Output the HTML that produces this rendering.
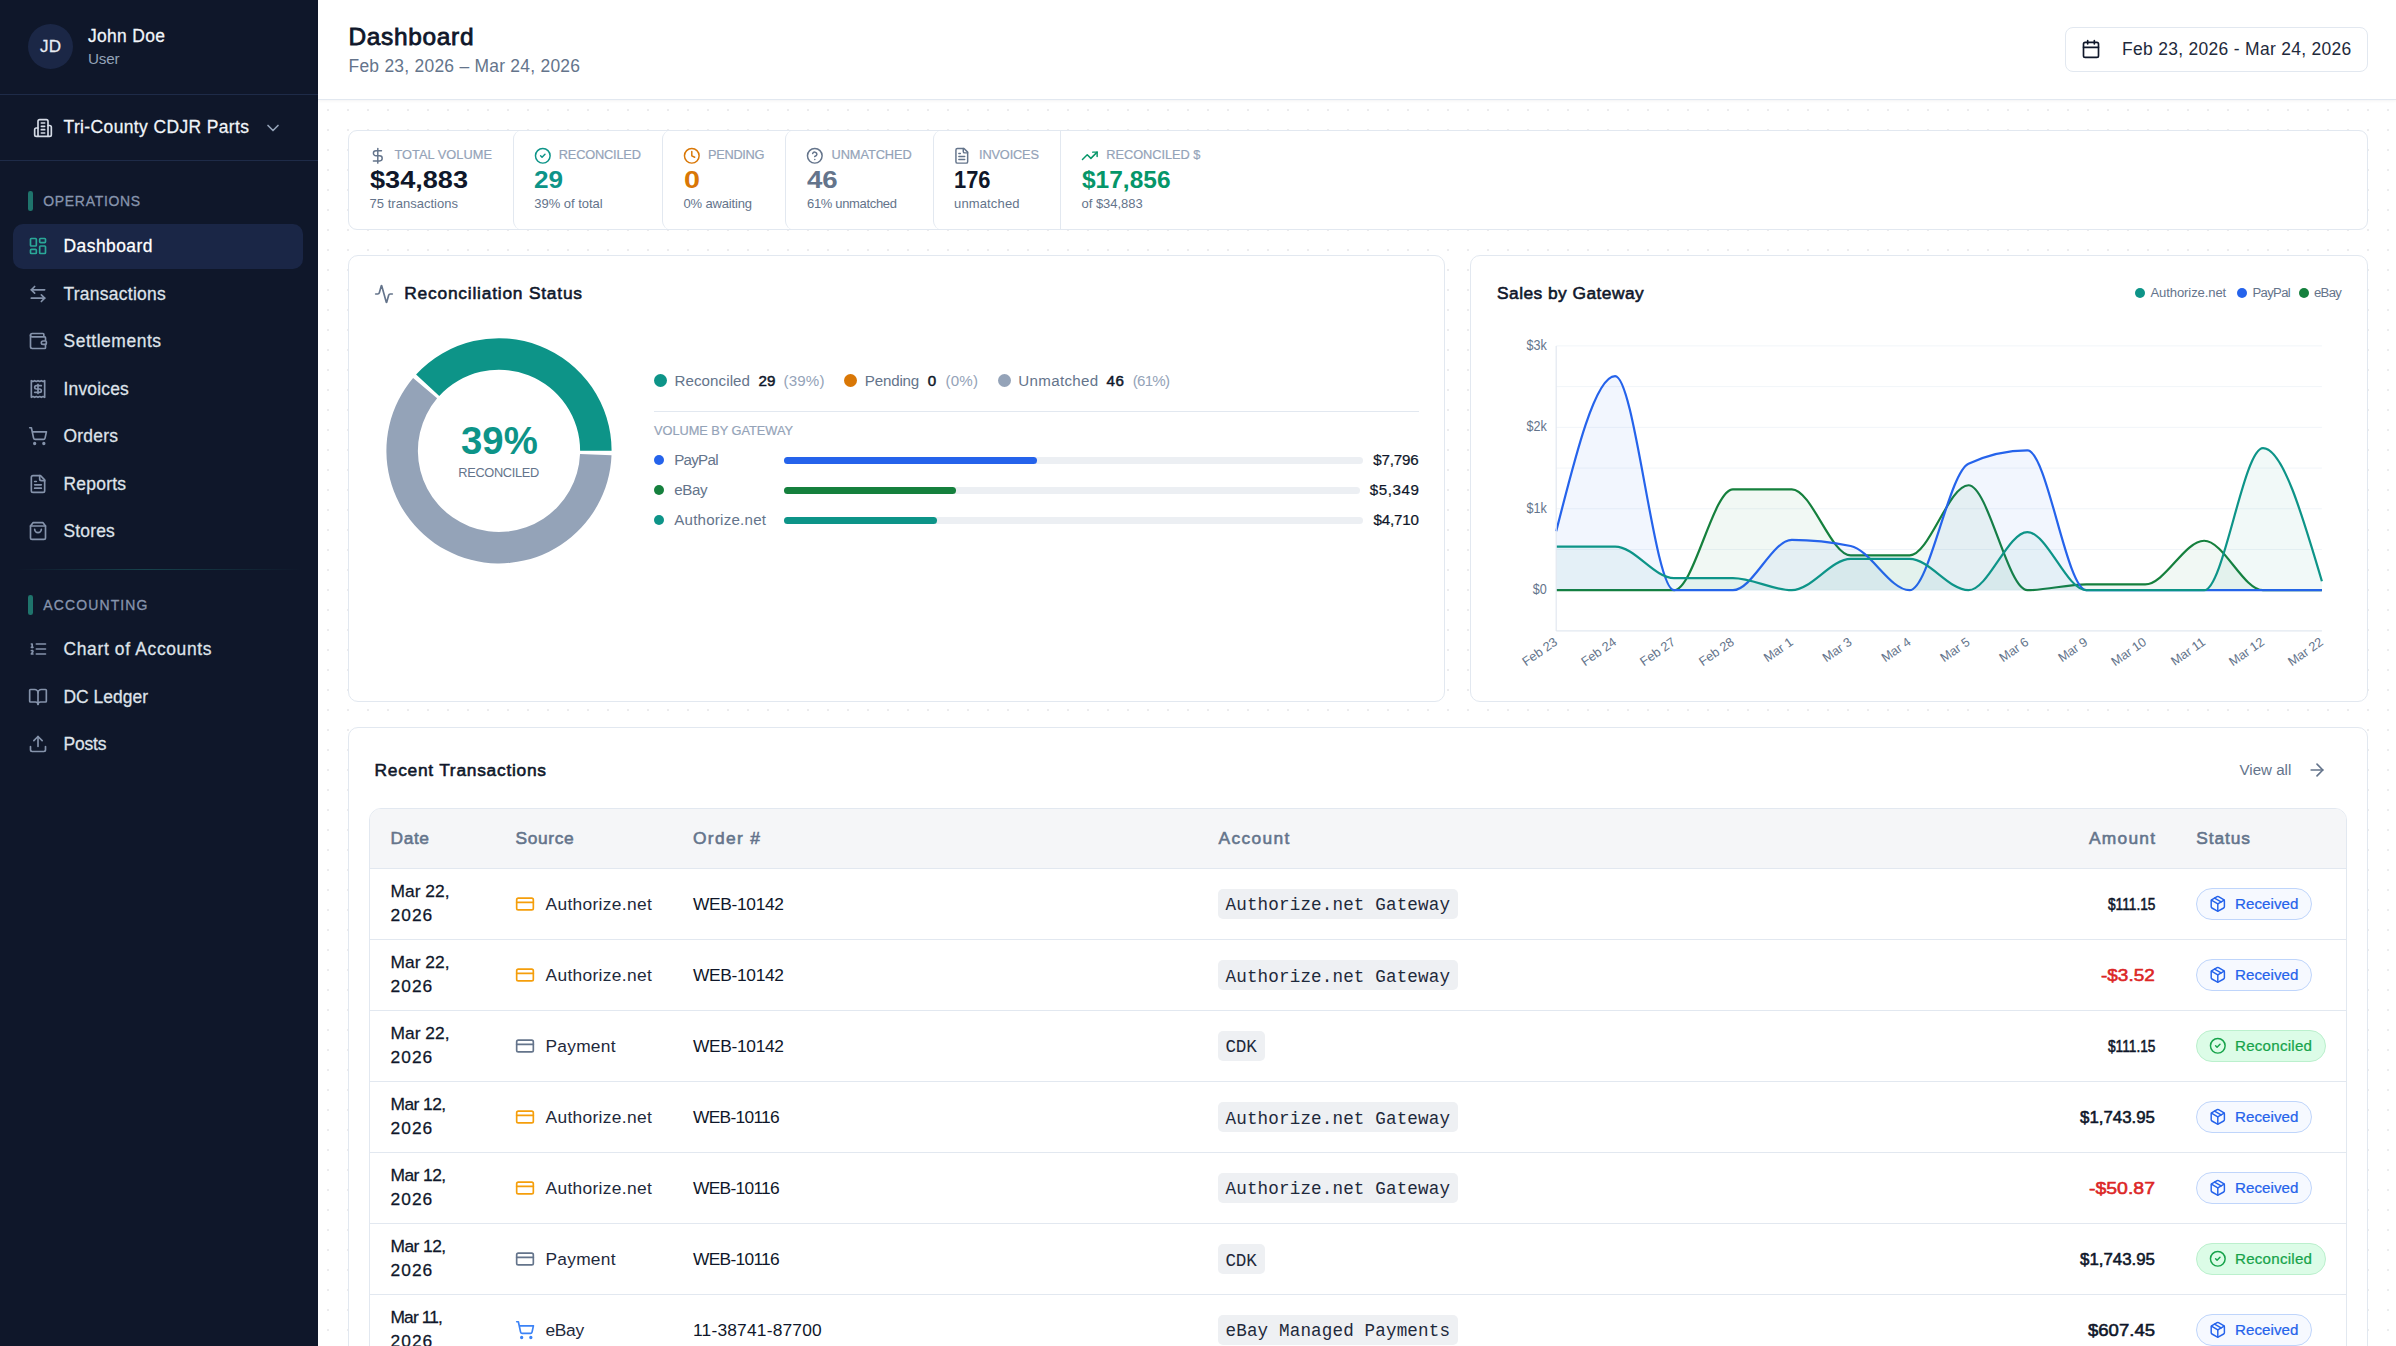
<!DOCTYPE html>
<html lang="en"><head><meta charset="utf-8"><title>Dashboard</title>
<style>
*{box-sizing:border-box;margin:0;padding:0}
html,body{width:2396px;height:1346px;overflow:hidden;background:#fff;font-family:"Liberation Sans",sans-serif;}
#app{position:relative;width:2396px;height:1346px;overflow:hidden}
.t{position:absolute;white-space:nowrap;line-height:1;font-weight:400}
.ic{position:absolute;overflow:visible}
.abs{position:absolute}
.sidebar{position:absolute;left:0;top:0;width:318px;height:1346px;background:#0f172a}
.main{position:absolute;left:318px;top:100px;width:2078px;height:1246px;background-color:#fff;
 background-image:radial-gradient(circle at 10px 10px,#ececee 1px,transparent 1.35px);background-size:20px 20px}
.topbar{position:absolute;left:318px;top:0;width:2078px;height:100px;background:#fff;border-bottom:1px solid #e2e8f0;box-shadow:0 1px 3px rgba(15,23,42,0.05);z-index:2}
.card{position:absolute;background:#fff;border:1px solid #e2e8f0;border-radius:10px}
</style></head><body><div id="app">
<aside class="sidebar"><div class="abs" style="left:28px;top:24px;width:45px;height:45px;border-radius:50%;background:#1b2746"></div><span class="t" style="left:40.00px;top:38.00px;font-size:17.07px;color:#e8ecf3;letter-spacing:0.144px;-webkit-text-stroke:0.26px #e8ecf3;">JD</span><span class="t" style="left:88.00px;top:28.00px;font-size:17.46px;color:#f1f5f9;letter-spacing:0.335px;-webkit-text-stroke:0.26px #f1f5f9;">John Doe</span><span class="t" style="left:88.00px;top:51.00px;font-size:15.23px;color:#94a3b8;letter-spacing:-0.213px;">User</span><div class="abs" style="left:0;top:94px;width:318px;height:1px;background:#1e2b48"></div><svg class="ic" style="left:33.20px;top:117.90px" width="20.00" height="20.00" viewBox="0 0 24 24" fill="none" stroke="#d5dbe6" stroke-width="2" stroke-linecap="round" stroke-linejoin="round"><path d="M6 22V4a2 2 0 0 1 2-2h8a2 2 0 0 1 2 2v18Z"/><path d="M6 12H4a2 2 0 0 0-2 2v6a2 2 0 0 0 2 2h2"/><path d="M18 9h2a2 2 0 0 1 2 2v9a2 2 0 0 1-2 2h-2"/><path d="M10 6h4"/><path d="M10 10h4"/><path d="M10 14h4"/><path d="M10 18h4"/></svg><span class="t" style="left:63.50px;top:119.00px;font-size:17.46px;color:#f1f5f9;letter-spacing:0.393px;-webkit-text-stroke:0.26px #f1f5f9;">Tri-County CDJR Parts</span><svg class="ic" style="left:263.20px;top:118.20px" width="20.00" height="20.00" viewBox="0 0 24 24" fill="none" stroke="#94a3b8" stroke-width="2" stroke-linecap="round" stroke-linejoin="round"><path d="m6 9 6 6 6-6"/></svg><div class="abs" style="left:0;top:160px;width:318px;height:1px;background:#1e2b48"></div><div class="abs" style="left:28.2px;top:191.0px;width:4.6px;height:20px;border-radius:2.3px;background:#1f746c"></div><span class="t" style="left:43.20px;top:195.00px;font-size:13.97px;color:#8794ad;letter-spacing:0.715px;-webkit-text-stroke:0.30px #8794ad;">OPERATIONS</span><div class="abs" style="left:13px;top:224px;width:290px;height:45px;border-radius:10px;background:#1a2646"></div><svg class="ic" style="left:28.00px;top:236.25px" width="20.00" height="20.00" viewBox="0 0 24 24" fill="none" stroke="#2aa898" stroke-width="2" stroke-linecap="round" stroke-linejoin="round"><rect width="7" height="9" x="3" y="3" rx="1"/><rect width="7" height="5" x="14" y="3" rx="1"/><rect width="7" height="9" x="14" y="12" rx="1"/><rect width="7" height="5" x="3" y="16" rx="1"/></svg><span class="t" style="left:63.50px;top:238.00px;font-size:17.46px;color:#ffffff;letter-spacing:0.461px;-webkit-text-stroke:0.26px #ffffff;">Dashboard</span><svg class="ic" style="left:28.00px;top:283.75px" width="20.00" height="20.00" viewBox="0 0 24 24" fill="none" stroke="#8593ab" stroke-width="2" stroke-linecap="round" stroke-linejoin="round"><path d="M8 3 4 7l4 4"/><path d="M4 7h16"/><path d="m16 21 4-4-4-4"/><path d="M20 17H4"/></svg><span class="t" style="left:63.50px;top:286.00px;font-size:17.46px;color:#dfe3ea;letter-spacing:0.278px;-webkit-text-stroke:0.26px #dfe3ea;">Transactions</span><svg class="ic" style="left:28.00px;top:331.25px" width="20.00" height="20.00" viewBox="0 0 24 24" fill="none" stroke="#8593ab" stroke-width="2" stroke-linecap="round" stroke-linejoin="round"><path d="M19 7V4a1 1 0 0 0-1-1H5a2 2 0 0 0 0 4h15a1 1 0 0 1 1 1v4h-3a2 2 0 0 0 0 4h3a1 1 0 0 0 1-1v-2a1 1 0 0 0-1-1"/><path d="M3 5v14a2 2 0 0 0 2 2h15a1 1 0 0 0 1-1v-4"/></svg><span class="t" style="left:63.50px;top:333.00px;font-size:17.46px;color:#dfe3ea;letter-spacing:0.542px;-webkit-text-stroke:0.26px #dfe3ea;">Settlements</span><svg class="ic" style="left:28.00px;top:378.75px" width="20.00" height="20.00" viewBox="0 0 24 24" fill="none" stroke="#8593ab" stroke-width="2" stroke-linecap="round" stroke-linejoin="round"><path d="M4 2v20l2-1 2 1 2-1 2 1 2-1 2 1 2-1 2 1V2l-2 1-2-1-2 1-2-1-2 1-2-1-2 1Z"/><path d="M16 8h-6a2 2 0 1 0 0 4h4a2 2 0 1 1 0 4H8"/><path d="M12 17.5v-11"/></svg><span class="t" style="left:63.50px;top:381.00px;font-size:17.46px;color:#dfe3ea;letter-spacing:0.183px;-webkit-text-stroke:0.26px #dfe3ea;">Invoices</span><svg class="ic" style="left:28.00px;top:426.25px" width="20.00" height="20.00" viewBox="0 0 24 24" fill="none" stroke="#8593ab" stroke-width="2" stroke-linecap="round" stroke-linejoin="round"><circle cx="8" cy="21" r="1"/><circle cx="19" cy="21" r="1"/><path d="M2.05 2.05h2l2.66 12.42a2 2 0 0 0 2 1.58h9.78a2 2 0 0 0 1.95-1.57l1.65-7.43H5.12"/></svg><span class="t" style="left:63.50px;top:428.00px;font-size:17.46px;color:#dfe3ea;letter-spacing:0.241px;-webkit-text-stroke:0.26px #dfe3ea;">Orders</span><svg class="ic" style="left:28.00px;top:473.75px" width="20.00" height="20.00" viewBox="0 0 24 24" fill="none" stroke="#8593ab" stroke-width="2" stroke-linecap="round" stroke-linejoin="round"><path d="M15 2H6a2 2 0 0 0-2 2v16a2 2 0 0 0 2 2h12a2 2 0 0 0 2-2V7Z"/><path d="M14 2v4a2 2 0 0 0 2 2h4"/><path d="M10 9H8"/><path d="M16 13H8"/><path d="M16 17H8"/></svg><span class="t" style="left:63.50px;top:476.00px;font-size:17.46px;color:#dfe3ea;letter-spacing:0.240px;-webkit-text-stroke:0.26px #dfe3ea;">Reports</span><svg class="ic" style="left:28.00px;top:521.25px" width="20.00" height="20.00" viewBox="0 0 24 24" fill="none" stroke="#8593ab" stroke-width="2" stroke-linecap="round" stroke-linejoin="round"><path d="M6 2 3 6v14a2 2 0 0 0 2 2h14a2 2 0 0 0 2-2V6l-3-4Z"/><path d="M3 6h18"/><path d="M16 10a4 4 0 0 1-8 0"/></svg><span class="t" style="left:63.50px;top:523.00px;font-size:17.46px;color:#dfe3ea;letter-spacing:0.169px;-webkit-text-stroke:0.26px #dfe3ea;">Stores</span><div class="abs" style="left:16px;top:569px;width:286px;height:1px;background:linear-gradient(90deg,rgba(31,110,110,0),rgba(31,110,110,.5) 45%,rgba(31,110,110,0))"></div><div class="abs" style="left:28.2px;top:594.9px;width:4.6px;height:20px;border-radius:2.3px;background:#1f746c"></div><span class="t" style="left:43.20px;top:599.00px;font-size:13.97px;color:#8794ad;letter-spacing:1.155px;-webkit-text-stroke:0.30px #8794ad;">ACCOUNTING</span><svg class="ic" style="left:28.00px;top:639.25px" width="20.00" height="20.00" viewBox="0 0 24 24" fill="none" stroke="#8593ab" stroke-width="2" stroke-linecap="round" stroke-linejoin="round"><path d="M10 12h11"/><path d="M10 18h11"/><path d="M10 6h11"/><path d="M4 10h2"/><path d="M4 6h1v4"/><path d="M6 18H4c0-1 2-2 2-3s-1-1.5-2-1"/></svg><span class="t" style="left:63.50px;top:641.00px;font-size:17.46px;color:#dfe3ea;letter-spacing:0.647px;-webkit-text-stroke:0.26px #dfe3ea;">Chart of Accounts</span><svg class="ic" style="left:28.00px;top:686.75px" width="20.00" height="20.00" viewBox="0 0 24 24" fill="none" stroke="#8593ab" stroke-width="2" stroke-linecap="round" stroke-linejoin="round"><path d="M12 7v14"/><path d="M3 18a1 1 0 0 1-1-1V4a1 1 0 0 1 1-1h5a4 4 0 0 1 4 4 4 4 0 0 1 4-4h5a1 1 0 0 1 1 1v13a1 1 0 0 1-1 1h-6a3 3 0 0 0-3 3 3 3 0 0 0-3-3z"/></svg><span class="t" style="left:63.50px;top:689.00px;font-size:17.46px;color:#dfe3ea;letter-spacing:0.022px;-webkit-text-stroke:0.26px #dfe3ea;">DC Ledger</span><svg class="ic" style="left:28.00px;top:734.25px" width="20.00" height="20.00" viewBox="0 0 24 24" fill="none" stroke="#8593ab" stroke-width="2" stroke-linecap="round" stroke-linejoin="round"><path d="M21 15v4a2 2 0 0 1-2 2H5a2 2 0 0 1-2-2v-4"/><polyline points="17 8 12 3 7 8"/><line x1="12" x2="12" y1="3" y2="15"/></svg><span class="t" style="left:63.50px;top:736.00px;font-size:17.46px;color:#dfe3ea;letter-spacing:-0.156px;-webkit-text-stroke:0.26px #dfe3ea;">Posts</span></aside><header><div class="topbar"></div><div class="abs" style="left:0;top:0;z-index:3"><span class="t" style="left:348.50px;top:25.00px;font-size:24.44px;color:#0f172a;letter-spacing:0.680px;-webkit-text-stroke:0.81px #0f172a;">Dashboard</span><span class="t" style="left:348.50px;top:58.00px;font-size:17.46px;color:#64748b;letter-spacing:0.253px;">Feb 23, 2026 – Mar 24, 2026</span><div class="abs" style="left:2065px;top:27px;width:303px;height:45px;border:1px solid #e2e8f0;border-radius:8px;background:#fff"></div><svg class="ic" style="left:2080.50px;top:39.20px" width="20.00" height="20.00" viewBox="0 0 24 24" fill="none" stroke="#0f172a" stroke-width="2" stroke-linecap="round" stroke-linejoin="round"><path d="M8 2v4"/><path d="M16 2v4"/><rect width="18" height="18" x="3" y="4" rx="2"/><path d="M3 10h18"/></svg><span class="t" style="left:2122.00px;top:41.00px;font-size:17.46px;color:#1e293b;letter-spacing:0.318px;">Feb 23, 2026 - Mar 24, 2026</span></div></header><main><div class="main"></div><section class="card" style="left:348px;top:130px;width:2020px;height:100px;border-radius:9px"></section><div class="abs" style="left:513px;top:130px;width:40px;height:100px;border-left:1px solid #e2e8f0;border-radius:9px 0 0 9px"></div><div class="abs" style="left:662px;top:130px;width:40px;height:100px;border-left:1px solid #e2e8f0;border-radius:9px 0 0 9px"></div><div class="abs" style="left:785px;top:130px;width:40px;height:100px;border-left:1px solid #e2e8f0;border-radius:9px 0 0 9px"></div><div class="abs" style="left:933px;top:130px;width:40px;height:100px;border-left:1px solid #e2e8f0;border-radius:9px 0 0 9px"></div><div class="abs" style="left:1060px;top:131px;width:1px;height:98px;background:#e2e8f0"></div><svg class="ic" style="left:368.70px;top:146.80px" width="17.60" height="17.60" viewBox="0 0 24 24" fill="none" stroke="#64748b" stroke-width="2" stroke-linecap="round" stroke-linejoin="round"><line x1="12" x2="12" y1="2" y2="22"/><path d="M17 5H9.5a3.5 3.5 0 0 0 0 7h5a3.5 3.5 0 0 1 0 7H6"/></svg><span class="t" style="left:394.50px;top:149.00px;font-size:12.80px;color:#94a3b8;letter-spacing:0.028px;-webkit-text-stroke:0.19px #94a3b8;">TOTAL VOLUME</span><span class="t" style="left:369.50px;top:169.00px;font-size:23.67px;color:#0f172a;font-weight:700;transform:scaleX(1.1460);transform-origin:0 0;">$34,883</span><span class="t" style="left:369.50px;top:197.00px;font-size:13.00px;color:#64748b;letter-spacing:0.023px;">75 transactions</span><svg class="ic" style="left:534.00px;top:146.80px" width="17.60" height="17.60" viewBox="0 0 24 24" fill="none" stroke="#0d9488" stroke-width="2" stroke-linecap="round" stroke-linejoin="round"><circle cx="12" cy="12" r="10"/><path d="m9 12 2 2 4-4"/></svg><span class="t" style="left:558.75px;top:149.00px;font-size:12.80px;color:#94a3b8;letter-spacing:-0.189px;-webkit-text-stroke:0.19px #94a3b8;">RECONCILED</span><span class="t" style="left:534.30px;top:169.00px;font-size:23.67px;color:#0d9488;font-weight:700;transform:scaleX(1.1054);transform-origin:0 0;">29</span><span class="t" style="left:534.30px;top:197.00px;font-size:13.00px;color:#64748b;letter-spacing:-0.032px;">39% of total</span><svg class="ic" style="left:682.80px;top:146.80px" width="17.60" height="17.60" viewBox="0 0 24 24" fill="none" stroke="#d97706" stroke-width="2" stroke-linecap="round" stroke-linejoin="round"><circle cx="12" cy="12" r="10"/><polyline points="12 6 12 12 16 14"/></svg><span class="t" style="left:708.00px;top:149.00px;font-size:12.80px;color:#94a3b8;letter-spacing:-0.302px;-webkit-text-stroke:0.19px #94a3b8;">PENDING</span><span class="t" style="left:683.50px;top:169.00px;font-size:23.67px;color:#d97706;font-weight:700;transform:scaleX(1.2151);transform-origin:0 0;">0</span><span class="t" style="left:683.50px;top:197.00px;font-size:13.00px;color:#64748b;letter-spacing:-0.161px;">0% awaiting</span><svg class="ic" style="left:806.30px;top:146.80px" width="17.60" height="17.60" viewBox="0 0 24 24" fill="none" stroke="#64748b" stroke-width="2" stroke-linecap="round" stroke-linejoin="round"><circle cx="12" cy="12" r="10"/><path d="M9.09 9a3 3 0 0 1 5.83 1c0 2-3 3-3 3"/><path d="M12 17h.01"/></svg><span class="t" style="left:831.50px;top:149.00px;font-size:12.80px;color:#94a3b8;letter-spacing:-0.070px;-webkit-text-stroke:0.19px #94a3b8;">UNMATCHED</span><span class="t" style="left:807.00px;top:169.00px;font-size:23.67px;color:#64748b;font-weight:700;transform:scaleX(1.1681);transform-origin:0 0;">46</span><span class="t" style="left:807.00px;top:197.00px;font-size:13.00px;color:#64748b;letter-spacing:-0.329px;">61% unmatched</span><svg class="ic" style="left:953.30px;top:146.80px" width="17.60" height="17.60" viewBox="0 0 24 24" fill="none" stroke="#64748b" stroke-width="2" stroke-linecap="round" stroke-linejoin="round"><path d="M15 2H6a2 2 0 0 0-2 2v16a2 2 0 0 0 2 2h12a2 2 0 0 0 2-2V7Z"/><path d="M14 2v4a2 2 0 0 0 2 2h4"/><path d="M10 9H8"/><path d="M16 13H8"/><path d="M16 17H8"/></svg><span class="t" style="left:979.00px;top:149.00px;font-size:12.80px;color:#94a3b8;letter-spacing:-0.165px;-webkit-text-stroke:0.19px #94a3b8;">INVOICES</span><span class="t" style="left:954.00px;top:169.00px;font-size:23.67px;color:#0f172a;font-weight:700;transform:scaleX(0.9245);transform-origin:0 0;">176</span><span class="t" style="left:954.00px;top:197.00px;font-size:13.00px;color:#64748b;letter-spacing:0.147px;">unmatched</span><svg class="ic" style="left:1080.80px;top:146.80px" width="17.60" height="17.60" viewBox="0 0 24 24" fill="none" stroke="#059669" stroke-width="2" stroke-linecap="round" stroke-linejoin="round"><polyline points="22 7 13.5 15.5 8.5 10.5 2 17"/><polyline points="16 7 22 7 22 13"/></svg><span class="t" style="left:1106.30px;top:149.00px;font-size:12.80px;color:#94a3b8;letter-spacing:-0.043px;-webkit-text-stroke:0.19px #94a3b8;">RECONCILED $</span><span class="t" style="left:1081.50px;top:169.00px;font-size:23.67px;color:#059669;font-weight:700;transform:scaleX(1.0349);transform-origin:0 0;">$17,856</span><span class="t" style="left:1081.50px;top:197.00px;font-size:13.00px;color:#64748b;letter-spacing:-0.022px;">of $34,883</span><section class="card" style="left:348px;top:255px;width:1097px;height:447px"></section><svg class="ic" style="left:374.20px;top:283.70px" width="20.00" height="20.00" viewBox="0 0 24 24" fill="none" stroke="#64748b" stroke-width="2" stroke-linecap="round" stroke-linejoin="round"><path d="M22 12h-2.48a2 2 0 0 0-1.93 1.46l-2.35 8.36a.25.25 0 0 1-.48 0L9.24 2.18a.25.25 0 0 0-.48 0l-2.35 8.36A2 2 0 0 1 4.49 12H2"/></svg><span class="t" style="left:404.25px;top:285.00px;font-size:17.36px;color:#0f172a;letter-spacing:0.782px;-webkit-text-stroke:0.57px #0f172a;">Reconciliation Status</span><svg class="abs" style="left:0;top:0" width="2396" height="1346" viewBox="0 0 2396 1346"><path d="M611.60,450.80A112.60,112.60,0,0,0,416.09,374.61L439.28,395.93A81.10,81.10,0,0,1,580.10,450.80Z" fill="#0d9488"/><path d="M413.10,378.00A112.60,112.60,0,1,0,611.51,455.32L580.03,454.05A81.10,81.10,0,1,1,437.13,398.37Z" fill="#94a3b8"/></svg><span class="t" style="left:460.75px;top:422.00px;font-size:38.80px;color:#0d9488;font-weight:700;transform:scaleX(0.9884);transform-origin:0 0;">39%</span><span class="t" style="left:458.25px;top:467.00px;font-size:12.80px;color:#64748b;letter-spacing:-0.323px;">RECONCILED</span><div class="abs" style="left:654.00px;top:374.00px;width:13.00px;height:13.00px;border-radius:50%;background:#0d9488"></div><span class="t" style="left:674.50px;top:373.00px;font-size:15.13px;color:#64748b;letter-spacing:0.075px;">Reconciled</span><span class="t" style="left:758.50px;top:373.00px;font-size:15.13px;color:#0f172a;letter-spacing:0.174px;-webkit-text-stroke:0.50px #0f172a;">29</span><span class="t" style="left:783.50px;top:373.00px;font-size:15.13px;color:#94a3b8;letter-spacing:0.160px;">(39%)</span><div class="abs" style="left:844.00px;top:374.00px;width:13.00px;height:13.00px;border-radius:50%;background:#d97706"></div><span class="t" style="left:864.75px;top:373.00px;font-size:15.13px;color:#64748b;letter-spacing:-0.169px;">Pending</span><span class="t" style="left:927.75px;top:373.00px;font-size:15.13px;color:#0f172a;-webkit-text-stroke:0.50px #0f172a;">0</span><span class="t" style="left:945.50px;top:373.00px;font-size:15.13px;color:#94a3b8;letter-spacing:0.188px;">(0%)</span><div class="abs" style="left:997.75px;top:374.00px;width:13.00px;height:13.00px;border-radius:50%;background:#94a3b8"></div><span class="t" style="left:1018.25px;top:373.00px;font-size:15.13px;color:#64748b;letter-spacing:0.330px;">Unmatched</span><span class="t" style="left:1106.50px;top:373.00px;font-size:15.13px;color:#0f172a;letter-spacing:0.674px;-webkit-text-stroke:0.50px #0f172a;">46</span><span class="t" style="left:1132.75px;top:373.00px;font-size:15.13px;color:#94a3b8;letter-spacing:-0.757px;">(61%)</span><div class="abs" style="left:654px;top:411px;width:765px;height:1px;background:#e2e8f0"></div><span class="t" style="left:654.00px;top:425.00px;font-size:12.80px;color:#94a3b8;letter-spacing:-0.038px;-webkit-text-stroke:0.19px #94a3b8;">VOLUME BY GATEWAY</span><div class="abs" style="left:654.00px;top:455.00px;width:10.00px;height:10.00px;border-radius:50%;background:#2563eb"></div><span class="t" style="left:674.25px;top:452.00px;font-size:15.13px;color:#64748b;letter-spacing:-0.737px;">PayPal</span><div class="abs" style="left:784px;top:456.5px;width:578.7px;height:7px;border-radius:3.5px;background:#eceff3"><div style="width:253.0px;height:7px;border-radius:3.5px;background:#2563eb"></div></div><span class="t" style="left:1373.20px;top:452.00px;font-size:15.13px;color:#0f172a;letter-spacing:-0.133px;-webkit-text-stroke:0.23px #0f172a;">$7,796</span><div class="abs" style="left:654.00px;top:485.00px;width:10.00px;height:10.00px;border-radius:50%;background:#15803d"></div><span class="t" style="left:674.25px;top:482.00px;font-size:15.13px;color:#64748b;letter-spacing:-0.411px;">eBay</span><div class="abs" style="left:784px;top:486.5px;width:576.0px;height:7px;border-radius:3.5px;background:#eceff3"><div style="width:172.0px;height:7px;border-radius:3.5px;background:#15803d"></div></div><span class="t" style="left:1369.80px;top:482.00px;font-size:15.13px;color:#0f172a;letter-spacing:0.547px;-webkit-text-stroke:0.23px #0f172a;">$5,349</span><div class="abs" style="left:654.00px;top:515.00px;width:10.00px;height:10.00px;border-radius:50%;background:#0d9488"></div><span class="t" style="left:674.25px;top:512.00px;font-size:15.13px;color:#64748b;letter-spacing:0.217px;">Authorize.net</span><div class="abs" style="left:784px;top:516.5px;width:578.7px;height:7px;border-radius:3.5px;background:#eceff3"><div style="width:153.0px;height:7px;border-radius:3.5px;background:#0d9488"></div></div><span class="t" style="left:1373.50px;top:512.00px;font-size:15.13px;color:#0f172a;letter-spacing:-0.193px;-webkit-text-stroke:0.23px #0f172a;">$4,710</span><section class="card" style="left:1470px;top:255px;width:898px;height:447px"></section><span class="t" style="left:1497.00px;top:285.00px;font-size:17.36px;color:#0f172a;letter-spacing:0.455px;-webkit-text-stroke:0.57px #0f172a;">Sales by Gateway</span><div class="abs" style="left:2135.00px;top:288.00px;width:10.00px;height:10.00px;border-radius:50%;background:#0d9488"></div><span class="t" style="left:2150.50px;top:286.00px;font-size:13.09px;color:#64748b;letter-spacing:-0.111px;">Authorize.net</span><div class="abs" style="left:2237.00px;top:288.00px;width:10.00px;height:10.00px;border-radius:50%;background:#2563eb"></div><span class="t" style="left:2252.50px;top:286.00px;font-size:13.09px;color:#64748b;letter-spacing:-0.655px;">PayPal</span><div class="abs" style="left:2299.00px;top:288.00px;width:10.00px;height:10.00px;border-radius:50%;background:#15803d"></div><span class="t" style="left:2314.00px;top:286.00px;font-size:13.09px;color:#64748b;letter-spacing:-0.655px;">eBay</span><svg class="abs" style="left:0;top:0" width="2396" height="1346" viewBox="0 0 2396 1346" font-family="Liberation Sans, sans-serif"><line x1="1556.20" y1="590.20" x2="2321.90" y2="590.20" stroke="#f1f5f9" stroke-width="1"/><line x1="1556.20" y1="549.48" x2="2321.90" y2="549.48" stroke="#f1f5f9" stroke-width="1"/><line x1="1556.20" y1="508.77" x2="2321.90" y2="508.77" stroke="#f1f5f9" stroke-width="1"/><line x1="1556.20" y1="468.05" x2="2321.90" y2="468.05" stroke="#f1f5f9" stroke-width="1"/><line x1="1556.20" y1="427.33" x2="2321.90" y2="427.33" stroke="#f1f5f9" stroke-width="1"/><line x1="1556.20" y1="386.62" x2="2321.90" y2="386.62" stroke="#f1f5f9" stroke-width="1"/><line x1="1556.20" y1="345.90" x2="2321.90" y2="345.90" stroke="#f1f5f9" stroke-width="1"/><path d="M1556.20,590.20C1575.83,590.20,1595.47,590.20,1615.10,590.20C1634.73,590.20,1654.37,590.20,1674.00,590.20C1693.63,590.20,1713.27,489.30,1732.90,489.30C1752.53,489.30,1772.17,489.30,1791.80,489.30C1811.43,489.30,1831.07,555.43,1850.70,555.43C1870.33,555.43,1889.97,555.43,1909.60,555.43C1929.23,555.43,1948.87,485.23,1968.50,485.23C1988.13,485.23,2007.77,590.20,2027.40,590.20C2047.03,590.20,2066.67,584.34,2086.30,584.34C2105.93,584.34,2125.57,584.34,2145.20,584.34C2164.83,584.34,2184.47,540.77,2204.10,540.77C2223.73,540.77,2243.37,590.20,2263.00,590.20C2282.63,590.20,2302.27,590.20,2321.90,590.20L2321.90,590.20L1556.20,590.20Z" fill="#15803d" fill-opacity="0.06" stroke="none"/><path d="M1556.20,590.20C1575.83,590.20,1595.47,590.20,1615.10,590.20C1634.73,590.20,1654.37,590.20,1674.00,590.20C1693.63,590.20,1713.27,489.30,1732.90,489.30C1752.53,489.30,1772.17,489.30,1791.80,489.30C1811.43,489.30,1831.07,555.43,1850.70,555.43C1870.33,555.43,1889.97,555.43,1909.60,555.43C1929.23,555.43,1948.87,485.23,1968.50,485.23C1988.13,485.23,2007.77,590.20,2027.40,590.20C2047.03,590.20,2066.67,584.34,2086.30,584.34C2105.93,584.34,2125.57,584.34,2145.20,584.34C2164.83,584.34,2184.47,540.77,2204.10,540.77C2223.73,540.77,2243.37,590.20,2263.00,590.20C2282.63,590.20,2302.27,590.20,2321.90,590.20" fill="none" stroke="#15803d" stroke-width="2.2"/><path d="M1556.20,531.32C1575.83,453.72,1595.47,376.11,1615.10,376.11C1634.73,376.11,1654.37,590.20,1674.00,590.20C1693.63,590.20,1713.27,590.20,1732.90,590.20C1752.53,590.20,1772.17,539.87,1791.80,539.87C1811.43,539.87,1831.07,541.91,1850.70,545.98C1870.33,550.05,1889.97,590.20,1909.60,590.20C1929.23,590.20,1948.87,472.45,1968.50,463.65C1988.13,454.86,2007.77,450.46,2027.40,450.46C2047.03,450.46,2066.67,590.20,2086.30,590.20C2105.93,590.20,2125.57,590.20,2145.20,590.20C2164.83,590.20,2184.47,590.20,2204.10,590.20C2223.73,590.20,2243.37,590.20,2263.00,590.20C2282.63,590.20,2302.27,590.20,2321.90,590.20L2321.90,590.20L1556.20,590.20Z" fill="#2563eb" fill-opacity="0.06" stroke="none"/><path d="M1556.20,531.32C1575.83,453.72,1595.47,376.11,1615.10,376.11C1634.73,376.11,1654.37,590.20,1674.00,590.20C1693.63,590.20,1713.27,590.20,1732.90,590.20C1752.53,590.20,1772.17,539.87,1791.80,539.87C1811.43,539.87,1831.07,541.91,1850.70,545.98C1870.33,550.05,1889.97,590.20,1909.60,590.20C1929.23,590.20,1948.87,472.45,1968.50,463.65C1988.13,454.86,2007.77,450.46,2027.40,450.46C2047.03,450.46,2066.67,590.20,2086.30,590.20C2105.93,590.20,2125.57,590.20,2145.20,590.20C2164.83,590.20,2184.47,590.20,2204.10,590.20C2223.73,590.20,2243.37,590.20,2263.00,590.20C2282.63,590.20,2302.27,590.20,2321.90,590.20" fill="none" stroke="#2563eb" stroke-width="2.2"/><path d="M1556.20,546.55C1575.83,546.55,1595.47,546.55,1615.10,546.55C1634.73,546.55,1654.37,578.15,1674.00,578.15C1693.63,578.15,1713.27,578.15,1732.90,578.15C1752.53,578.15,1772.17,590.20,1791.80,590.20C1811.43,590.20,1831.07,558.85,1850.70,558.85C1870.33,558.85,1889.97,558.85,1909.60,558.85C1929.23,558.85,1948.87,590.20,1968.50,590.20C1988.13,590.20,2007.77,532.06,2027.40,532.06C2047.03,532.06,2066.67,590.20,2086.30,590.20C2105.93,590.20,2125.57,590.20,2145.20,590.20C2164.83,590.20,2184.47,590.20,2204.10,590.20C2223.73,590.20,2243.37,448.18,2263.00,448.18C2282.63,448.18,2302.27,514.71,2321.90,581.24L2321.90,590.20L1556.20,590.20Z" fill="#0d9488" fill-opacity="0.06" stroke="none"/><path d="M1556.20,546.55C1575.83,546.55,1595.47,546.55,1615.10,546.55C1634.73,546.55,1654.37,578.15,1674.00,578.15C1693.63,578.15,1713.27,578.15,1732.90,578.15C1752.53,578.15,1772.17,590.20,1791.80,590.20C1811.43,590.20,1831.07,558.85,1850.70,558.85C1870.33,558.85,1889.97,558.85,1909.60,558.85C1929.23,558.85,1948.87,590.20,1968.50,590.20C1988.13,590.20,2007.77,532.06,2027.40,532.06C2047.03,532.06,2066.67,590.20,2086.30,590.20C2105.93,590.20,2125.57,590.20,2145.20,590.20C2164.83,590.20,2184.47,590.20,2204.10,590.20C2223.73,590.20,2243.37,448.18,2263.00,448.18C2282.63,448.18,2302.27,514.71,2321.90,581.24" fill="none" stroke="#0d9488" stroke-width="2.2"/><line x1="1556.20" y1="345.90" x2="1556.20" y2="630.92" stroke="#e2e8f0" stroke-width="1.2"/><line x1="1556.20" y1="630.92" x2="2321.90" y2="630.92" stroke="#e2e8f0" stroke-width="1.2"/><text x="1546.80" y="589.20" text-anchor="end" font-size="14" fill="#64748b" transform="translate(1546.80,0) scale(0.9,1) translate(-1546.80,0)"><tspan dy="0.355em">$0</tspan></text><text x="1546.80" y="507.77" text-anchor="end" font-size="14" fill="#64748b" transform="translate(1546.80,0) scale(0.9,1) translate(-1546.80,0)"><tspan dy="0.355em">$1k</tspan></text><text x="1546.80" y="426.33" text-anchor="end" font-size="14" fill="#64748b" transform="translate(1546.80,0) scale(0.9,1) translate(-1546.80,0)"><tspan dy="0.355em">$2k</tspan></text><text x="1546.80" y="344.90" text-anchor="end" font-size="14" fill="#64748b" transform="translate(1546.80,0) scale(0.9,1) translate(-1546.80,0)"><tspan dy="0.355em">$3k</tspan></text><text x="1553.20" y="636.52" text-anchor="end" font-size="12.7" fill="#64748b" transform="rotate(-35,1553.20,636.52)"><tspan dy="0.71em">Feb 23</tspan></text><text x="1612.10" y="636.52" text-anchor="end" font-size="12.7" fill="#64748b" transform="rotate(-35,1612.10,636.52)"><tspan dy="0.71em">Feb 24</tspan></text><text x="1671.00" y="636.52" text-anchor="end" font-size="12.7" fill="#64748b" transform="rotate(-35,1671.00,636.52)"><tspan dy="0.71em">Feb 27</tspan></text><text x="1729.90" y="636.52" text-anchor="end" font-size="12.7" fill="#64748b" transform="rotate(-35,1729.90,636.52)"><tspan dy="0.71em">Feb 28</tspan></text><text x="1788.80" y="636.52" text-anchor="end" font-size="12.7" fill="#64748b" transform="rotate(-35,1788.80,636.52)"><tspan dy="0.71em">Mar 1</tspan></text><text x="1847.70" y="636.52" text-anchor="end" font-size="12.7" fill="#64748b" transform="rotate(-35,1847.70,636.52)"><tspan dy="0.71em">Mar 3</tspan></text><text x="1906.60" y="636.52" text-anchor="end" font-size="12.7" fill="#64748b" transform="rotate(-35,1906.60,636.52)"><tspan dy="0.71em">Mar 4</tspan></text><text x="1965.50" y="636.52" text-anchor="end" font-size="12.7" fill="#64748b" transform="rotate(-35,1965.50,636.52)"><tspan dy="0.71em">Mar 5</tspan></text><text x="2024.40" y="636.52" text-anchor="end" font-size="12.7" fill="#64748b" transform="rotate(-35,2024.40,636.52)"><tspan dy="0.71em">Mar 6</tspan></text><text x="2083.30" y="636.52" text-anchor="end" font-size="12.7" fill="#64748b" transform="rotate(-35,2083.30,636.52)"><tspan dy="0.71em">Mar 9</tspan></text><text x="2142.20" y="636.52" text-anchor="end" font-size="12.7" fill="#64748b" transform="rotate(-35,2142.20,636.52)"><tspan dy="0.71em">Mar 10</tspan></text><text x="2201.10" y="636.52" text-anchor="end" font-size="12.7" fill="#64748b" transform="rotate(-35,2201.10,636.52)"><tspan dy="0.71em">Mar 11</tspan></text><text x="2260.00" y="636.52" text-anchor="end" font-size="12.7" fill="#64748b" transform="rotate(-35,2260.00,636.52)"><tspan dy="0.71em">Mar 12</tspan></text><text x="2318.90" y="636.52" text-anchor="end" font-size="12.7" fill="#64748b" transform="rotate(-35,2318.90,636.52)"><tspan dy="0.71em">Mar 22</tspan></text></svg><section class="card" style="left:348px;top:727px;width:2020px;height:700px"></section><span class="t" style="left:374.50px;top:762.00px;font-size:17.36px;color:#0f172a;letter-spacing:0.736px;-webkit-text-stroke:0.57px #0f172a;">Recent Transactions</span><span class="t" style="left:2239.50px;top:762.00px;font-size:15.13px;color:#64748b;letter-spacing:-0.015px;">View all</span><svg class="ic" style="left:2307.20px;top:760.00px" width="20.00" height="20.00" viewBox="0 0 24 24" fill="none" stroke="#64748b" stroke-width="2" stroke-linecap="round" stroke-linejoin="round"><path d="M5 12h14"/><path d="m12 5 7 7-7 7"/></svg><div class="abs" style="left:369px;top:808px;width:1978px;height:620px;border:1px solid #e2e8f0;border-radius:12px;background:#fff;overflow:hidden"><div style="height:60px;background:#f5f6f8;border-bottom:1px solid #e2e8f0"></div></div><span class="t" style="left:390.50px;top:830.00px;font-size:17.36px;color:#64748b;letter-spacing:0.610px;-webkit-text-stroke:0.57px #64748b;">Date</span><span class="t" style="left:515.50px;top:830.00px;font-size:17.36px;color:#64748b;letter-spacing:0.647px;-webkit-text-stroke:0.57px #64748b;">Source</span><span class="t" style="left:693.00px;top:830.00px;font-size:17.36px;color:#64748b;letter-spacing:1.357px;-webkit-text-stroke:0.57px #64748b;">Order #</span><span class="t" style="left:1218.50px;top:830.00px;font-size:17.36px;color:#64748b;letter-spacing:1.335px;-webkit-text-stroke:0.57px #64748b;">Account</span><span class="t" style="left:2089.00px;top:830.00px;font-size:17.36px;color:#64748b;letter-spacing:1.234px;-webkit-text-stroke:0.57px #64748b;">Amount</span><span class="t" style="left:2196.25px;top:830.00px;font-size:17.36px;color:#64748b;letter-spacing:0.906px;-webkit-text-stroke:0.57px #64748b;">Status</span><span class="t" style="left:390.50px;top:883.00px;font-size:17.36px;color:#0f172a;letter-spacing:0.023px;-webkit-text-stroke:0.26px #0f172a;">Mar 22,</span><span class="t" style="left:390.50px;top:907.00px;font-size:17.36px;color:#0f172a;letter-spacing:1.043px;-webkit-text-stroke:0.26px #0f172a;">2026</span><svg class="ic" style="left:515.20px;top:894.00px" width="20.00" height="20.00" viewBox="0 0 24 24" fill="none" stroke="#f59e0b" stroke-width="2" stroke-linecap="round" stroke-linejoin="round"><rect width="20" height="14" x="2" y="5" rx="2"/><line x1="2" x2="22" y1="10" y2="10"/></svg><span class="t" style="left:545.50px;top:896.00px;font-size:17.36px;color:#1e293b;letter-spacing:0.329px;">Authorize.net</span><span class="t" style="left:693.00px;top:896.00px;font-size:17.36px;color:#0f172a;letter-spacing:-0.326px;">WEB-10142</span><div class="abs" style="left:1218px;top:889.25px;width:240.00px;height:29.5px;border-radius:5px;background:#eef0f3"></div><span class="t" style="left:1225.50px;top:897.00px;font-size:17.60px;color:#1e293b;font-family:'Liberation Mono',monospace;letter-spacing:0.139px;">Authorize.net Gateway</span><span class="t" style="left:2107.50px;top:896.00px;font-size:17.36px;color:#0f172a;transform:scaleX(0.7892);transform-origin:0 0;-webkit-text-stroke:0.57px #0f172a;">$111.15</span><div class="abs" style="left:2196px;top:888.0px;width:115.5px;height:31.5px;border-radius:16px;background:#f6f9ff;border:1px solid #bfd5fb"></div><svg class="ic" style="left:2209.20px;top:894.95px" width="17.60" height="17.60" viewBox="0 0 24 24" fill="none" stroke="#2563eb" stroke-width="2" stroke-linecap="round" stroke-linejoin="round"><path d="m7.5 4.27 9 5.15"/><path d="M21 8a2 2 0 0 0-1-1.73l-7-4a2 2 0 0 0-2 0l-7 4A2 2 0 0 0 3 8v8a2 2 0 0 0 1 1.73l7 4a2 2 0 0 0 2 0l7-4A2 2 0 0 0 21 16Z"/><path d="m3.3 7 8.7 5 8.7-5"/><path d="M12 22V12"/></svg><span class="t" style="left:2235.00px;top:896.00px;font-size:15.13px;color:#2563eb;letter-spacing:0.063px;-webkit-text-stroke:0.23px #2563eb;">Received</span><div class="abs" style="left:370px;top:939px;width:1976px;height:1px;background:#e2e8f0"></div><span class="t" style="left:390.50px;top:954.00px;font-size:17.36px;color:#0f172a;letter-spacing:0.023px;-webkit-text-stroke:0.26px #0f172a;">Mar 22,</span><span class="t" style="left:390.50px;top:978.00px;font-size:17.36px;color:#0f172a;letter-spacing:1.043px;-webkit-text-stroke:0.26px #0f172a;">2026</span><svg class="ic" style="left:515.20px;top:965.00px" width="20.00" height="20.00" viewBox="0 0 24 24" fill="none" stroke="#f59e0b" stroke-width="2" stroke-linecap="round" stroke-linejoin="round"><rect width="20" height="14" x="2" y="5" rx="2"/><line x1="2" x2="22" y1="10" y2="10"/></svg><span class="t" style="left:545.50px;top:967.00px;font-size:17.36px;color:#1e293b;letter-spacing:0.329px;">Authorize.net</span><span class="t" style="left:693.00px;top:967.00px;font-size:17.36px;color:#0f172a;letter-spacing:-0.326px;">WEB-10142</span><div class="abs" style="left:1218px;top:960.25px;width:240.00px;height:29.5px;border-radius:5px;background:#eef0f3"></div><span class="t" style="left:1225.50px;top:969.00px;font-size:17.60px;color:#1e293b;font-family:'Liberation Mono',monospace;letter-spacing:0.139px;">Authorize.net Gateway</span><span class="t" style="left:2101.25px;top:967.00px;font-size:17.36px;color:#dc2626;transform:scaleX(1.0918);transform-origin:0 0;-webkit-text-stroke:0.57px #dc2626;">-$3.52</span><div class="abs" style="left:2196px;top:959.0px;width:115.5px;height:31.5px;border-radius:16px;background:#f6f9ff;border:1px solid #bfd5fb"></div><svg class="ic" style="left:2209.20px;top:965.95px" width="17.60" height="17.60" viewBox="0 0 24 24" fill="none" stroke="#2563eb" stroke-width="2" stroke-linecap="round" stroke-linejoin="round"><path d="m7.5 4.27 9 5.15"/><path d="M21 8a2 2 0 0 0-1-1.73l-7-4a2 2 0 0 0-2 0l-7 4A2 2 0 0 0 3 8v8a2 2 0 0 0 1 1.73l7 4a2 2 0 0 0 2 0l7-4A2 2 0 0 0 21 16Z"/><path d="m3.3 7 8.7 5 8.7-5"/><path d="M12 22V12"/></svg><span class="t" style="left:2235.00px;top:967.00px;font-size:15.13px;color:#2563eb;letter-spacing:0.063px;-webkit-text-stroke:0.23px #2563eb;">Received</span><div class="abs" style="left:370px;top:1010px;width:1976px;height:1px;background:#e2e8f0"></div><span class="t" style="left:390.50px;top:1025.00px;font-size:17.36px;color:#0f172a;letter-spacing:0.023px;-webkit-text-stroke:0.26px #0f172a;">Mar 22,</span><span class="t" style="left:390.50px;top:1049.00px;font-size:17.36px;color:#0f172a;letter-spacing:1.043px;-webkit-text-stroke:0.26px #0f172a;">2026</span><svg class="ic" style="left:515.20px;top:1036.00px" width="20.00" height="20.00" viewBox="0 0 24 24" fill="none" stroke="#64748b" stroke-width="2" stroke-linecap="round" stroke-linejoin="round"><rect width="20" height="14" x="2" y="5" rx="2"/><line x1="2" x2="22" y1="10" y2="10"/></svg><span class="t" style="left:545.50px;top:1038.00px;font-size:17.36px;color:#1e293b;letter-spacing:0.247px;">Payment</span><span class="t" style="left:693.00px;top:1038.00px;font-size:17.36px;color:#0f172a;letter-spacing:-0.326px;">WEB-10142</span><div class="abs" style="left:1218px;top:1031.25px;width:46.75px;height:29.5px;border-radius:5px;background:#eef0f3"></div><span class="t" style="left:1225.50px;top:1039.00px;font-size:17.60px;color:#1e293b;font-family:'Liberation Mono',monospace;letter-spacing:-0.218px;">CDK</span><span class="t" style="left:2107.50px;top:1038.00px;font-size:17.36px;color:#0f172a;transform:scaleX(0.7892);transform-origin:0 0;-webkit-text-stroke:0.57px #0f172a;">$111.15</span><div class="abs" style="left:2196px;top:1030.0px;width:129.5px;height:31.5px;border-radius:16px;background:#dcfce7;border:1px solid #bbf0cd"></div><svg class="ic" style="left:2209.20px;top:1036.95px" width="17.60" height="17.60" viewBox="0 0 24 24" fill="none" stroke="#16a34a" stroke-width="2" stroke-linecap="round" stroke-linejoin="round"><circle cx="12" cy="12" r="10"/><path d="m9 12 2 2 4-4"/></svg><span class="t" style="left:2235.00px;top:1038.00px;font-size:15.13px;color:#16a34a;letter-spacing:0.242px;-webkit-text-stroke:0.23px #16a34a;">Reconciled</span><div class="abs" style="left:370px;top:1081px;width:1976px;height:1px;background:#e2e8f0"></div><span class="t" style="left:390.50px;top:1096.00px;font-size:17.36px;color:#0f172a;letter-spacing:-0.544px;-webkit-text-stroke:0.26px #0f172a;">Mar 12,</span><span class="t" style="left:390.50px;top:1120.00px;font-size:17.36px;color:#0f172a;letter-spacing:1.043px;-webkit-text-stroke:0.26px #0f172a;">2026</span><svg class="ic" style="left:515.20px;top:1107.00px" width="20.00" height="20.00" viewBox="0 0 24 24" fill="none" stroke="#f59e0b" stroke-width="2" stroke-linecap="round" stroke-linejoin="round"><rect width="20" height="14" x="2" y="5" rx="2"/><line x1="2" x2="22" y1="10" y2="10"/></svg><span class="t" style="left:545.50px;top:1109.00px;font-size:17.36px;color:#1e293b;letter-spacing:0.329px;">Authorize.net</span><span class="t" style="left:693.00px;top:1109.00px;font-size:17.36px;color:#0f172a;letter-spacing:-0.701px;">WEB-10116</span><div class="abs" style="left:1218px;top:1102.25px;width:240.00px;height:29.5px;border-radius:5px;background:#eef0f3"></div><span class="t" style="left:1225.50px;top:1111.00px;font-size:17.60px;color:#1e293b;font-family:'Liberation Mono',monospace;letter-spacing:0.139px;">Authorize.net Gateway</span><span class="t" style="left:2080.00px;top:1109.00px;font-size:17.36px;color:#0f172a;transform:scaleX(0.9711);transform-origin:0 0;-webkit-text-stroke:0.57px #0f172a;">$1,743.95</span><div class="abs" style="left:2196px;top:1101.0px;width:115.5px;height:31.5px;border-radius:16px;background:#f6f9ff;border:1px solid #bfd5fb"></div><svg class="ic" style="left:2209.20px;top:1107.95px" width="17.60" height="17.60" viewBox="0 0 24 24" fill="none" stroke="#2563eb" stroke-width="2" stroke-linecap="round" stroke-linejoin="round"><path d="m7.5 4.27 9 5.15"/><path d="M21 8a2 2 0 0 0-1-1.73l-7-4a2 2 0 0 0-2 0l-7 4A2 2 0 0 0 3 8v8a2 2 0 0 0 1 1.73l7 4a2 2 0 0 0 2 0l7-4A2 2 0 0 0 21 16Z"/><path d="m3.3 7 8.7 5 8.7-5"/><path d="M12 22V12"/></svg><span class="t" style="left:2235.00px;top:1109.00px;font-size:15.13px;color:#2563eb;letter-spacing:0.063px;-webkit-text-stroke:0.23px #2563eb;">Received</span><div class="abs" style="left:370px;top:1152px;width:1976px;height:1px;background:#e2e8f0"></div><span class="t" style="left:390.50px;top:1167.00px;font-size:17.36px;color:#0f172a;letter-spacing:-0.544px;-webkit-text-stroke:0.26px #0f172a;">Mar 12,</span><span class="t" style="left:390.50px;top:1191.00px;font-size:17.36px;color:#0f172a;letter-spacing:1.043px;-webkit-text-stroke:0.26px #0f172a;">2026</span><svg class="ic" style="left:515.20px;top:1178.00px" width="20.00" height="20.00" viewBox="0 0 24 24" fill="none" stroke="#f59e0b" stroke-width="2" stroke-linecap="round" stroke-linejoin="round"><rect width="20" height="14" x="2" y="5" rx="2"/><line x1="2" x2="22" y1="10" y2="10"/></svg><span class="t" style="left:545.50px;top:1180.00px;font-size:17.36px;color:#1e293b;letter-spacing:0.329px;">Authorize.net</span><span class="t" style="left:693.00px;top:1180.00px;font-size:17.36px;color:#0f172a;letter-spacing:-0.701px;">WEB-10116</span><div class="abs" style="left:1218px;top:1173.25px;width:240.00px;height:29.5px;border-radius:5px;background:#eef0f3"></div><span class="t" style="left:1225.50px;top:1181.00px;font-size:17.60px;color:#1e293b;font-family:'Liberation Mono',monospace;letter-spacing:0.139px;">Authorize.net Gateway</span><span class="t" style="left:2089.00px;top:1180.00px;font-size:17.36px;color:#dc2626;transform:scaleX(1.1208);transform-origin:0 0;-webkit-text-stroke:0.57px #dc2626;">-$50.87</span><div class="abs" style="left:2196px;top:1172.0px;width:115.5px;height:31.5px;border-radius:16px;background:#f6f9ff;border:1px solid #bfd5fb"></div><svg class="ic" style="left:2209.20px;top:1178.95px" width="17.60" height="17.60" viewBox="0 0 24 24" fill="none" stroke="#2563eb" stroke-width="2" stroke-linecap="round" stroke-linejoin="round"><path d="m7.5 4.27 9 5.15"/><path d="M21 8a2 2 0 0 0-1-1.73l-7-4a2 2 0 0 0-2 0l-7 4A2 2 0 0 0 3 8v8a2 2 0 0 0 1 1.73l7 4a2 2 0 0 0 2 0l7-4A2 2 0 0 0 21 16Z"/><path d="m3.3 7 8.7 5 8.7-5"/><path d="M12 22V12"/></svg><span class="t" style="left:2235.00px;top:1180.00px;font-size:15.13px;color:#2563eb;letter-spacing:0.063px;-webkit-text-stroke:0.23px #2563eb;">Received</span><div class="abs" style="left:370px;top:1223px;width:1976px;height:1px;background:#e2e8f0"></div><span class="t" style="left:390.50px;top:1238.00px;font-size:17.36px;color:#0f172a;letter-spacing:-0.544px;-webkit-text-stroke:0.26px #0f172a;">Mar 12,</span><span class="t" style="left:390.50px;top:1262.00px;font-size:17.36px;color:#0f172a;letter-spacing:1.043px;-webkit-text-stroke:0.26px #0f172a;">2026</span><svg class="ic" style="left:515.20px;top:1249.00px" width="20.00" height="20.00" viewBox="0 0 24 24" fill="none" stroke="#64748b" stroke-width="2" stroke-linecap="round" stroke-linejoin="round"><rect width="20" height="14" x="2" y="5" rx="2"/><line x1="2" x2="22" y1="10" y2="10"/></svg><span class="t" style="left:545.50px;top:1251.00px;font-size:17.36px;color:#1e293b;letter-spacing:0.247px;">Payment</span><span class="t" style="left:693.00px;top:1251.00px;font-size:17.36px;color:#0f172a;letter-spacing:-0.701px;">WEB-10116</span><div class="abs" style="left:1218px;top:1244.25px;width:46.75px;height:29.5px;border-radius:5px;background:#eef0f3"></div><span class="t" style="left:1225.50px;top:1253.00px;font-size:17.60px;color:#1e293b;font-family:'Liberation Mono',monospace;letter-spacing:-0.218px;">CDK</span><span class="t" style="left:2080.00px;top:1251.00px;font-size:17.36px;color:#0f172a;transform:scaleX(0.9711);transform-origin:0 0;-webkit-text-stroke:0.57px #0f172a;">$1,743.95</span><div class="abs" style="left:2196px;top:1243.0px;width:129.5px;height:31.5px;border-radius:16px;background:#dcfce7;border:1px solid #bbf0cd"></div><svg class="ic" style="left:2209.20px;top:1249.95px" width="17.60" height="17.60" viewBox="0 0 24 24" fill="none" stroke="#16a34a" stroke-width="2" stroke-linecap="round" stroke-linejoin="round"><circle cx="12" cy="12" r="10"/><path d="m9 12 2 2 4-4"/></svg><span class="t" style="left:2235.00px;top:1251.00px;font-size:15.13px;color:#16a34a;letter-spacing:0.242px;-webkit-text-stroke:0.23px #16a34a;">Reconciled</span><div class="abs" style="left:370px;top:1294px;width:1976px;height:1px;background:#e2e8f0"></div><span class="t" style="left:390.50px;top:1309.00px;font-size:17.36px;color:#0f172a;letter-spacing:-0.868px;-webkit-text-stroke:0.26px #0f172a;">Mar 11,</span><span class="t" style="left:390.50px;top:1333.00px;font-size:17.36px;color:#0f172a;letter-spacing:1.043px;-webkit-text-stroke:0.26px #0f172a;">2026</span><svg class="ic" style="left:515.20px;top:1320.00px" width="20.00" height="20.00" viewBox="0 0 24 24" fill="none" stroke="#3b82f6" stroke-width="2" stroke-linecap="round" stroke-linejoin="round"><circle cx="8" cy="21" r="1"/><circle cx="19" cy="21" r="1"/><path d="M2.05 2.05h2l2.66 12.42a2 2 0 0 0 2 1.58h9.78a2 2 0 0 0 1.95-1.57l1.65-7.43H5.12"/></svg><span class="t" style="left:545.50px;top:1322.00px;font-size:17.36px;color:#1e293b;letter-spacing:-0.326px;">eBay</span><span class="t" style="left:693.00px;top:1322.00px;font-size:17.36px;color:#0f172a;letter-spacing:0.197px;">11-38741-87700</span><div class="abs" style="left:1218px;top:1315.25px;width:240.00px;height:29.5px;border-radius:5px;background:#eef0f3"></div><span class="t" style="left:1225.50px;top:1323.00px;font-size:17.60px;color:#1e293b;font-family:'Liberation Mono',monospace;letter-spacing:0.139px;">eBay Managed Payments</span><span class="t" style="left:2088.00px;top:1322.00px;font-size:17.36px;color:#0f172a;transform:scaleX(1.0678);transform-origin:0 0;-webkit-text-stroke:0.57px #0f172a;">$607.45</span><div class="abs" style="left:2196px;top:1314.0px;width:115.5px;height:31.5px;border-radius:16px;background:#f6f9ff;border:1px solid #bfd5fb"></div><svg class="ic" style="left:2209.20px;top:1320.95px" width="17.60" height="17.60" viewBox="0 0 24 24" fill="none" stroke="#2563eb" stroke-width="2" stroke-linecap="round" stroke-linejoin="round"><path d="m7.5 4.27 9 5.15"/><path d="M21 8a2 2 0 0 0-1-1.73l-7-4a2 2 0 0 0-2 0l-7 4A2 2 0 0 0 3 8v8a2 2 0 0 0 1 1.73l7 4a2 2 0 0 0 2 0l7-4A2 2 0 0 0 21 16Z"/><path d="m3.3 7 8.7 5 8.7-5"/><path d="M12 22V12"/></svg><span class="t" style="left:2235.00px;top:1322.00px;font-size:15.13px;color:#2563eb;letter-spacing:0.063px;-webkit-text-stroke:0.23px #2563eb;">Received</span></main></div></body></html>
